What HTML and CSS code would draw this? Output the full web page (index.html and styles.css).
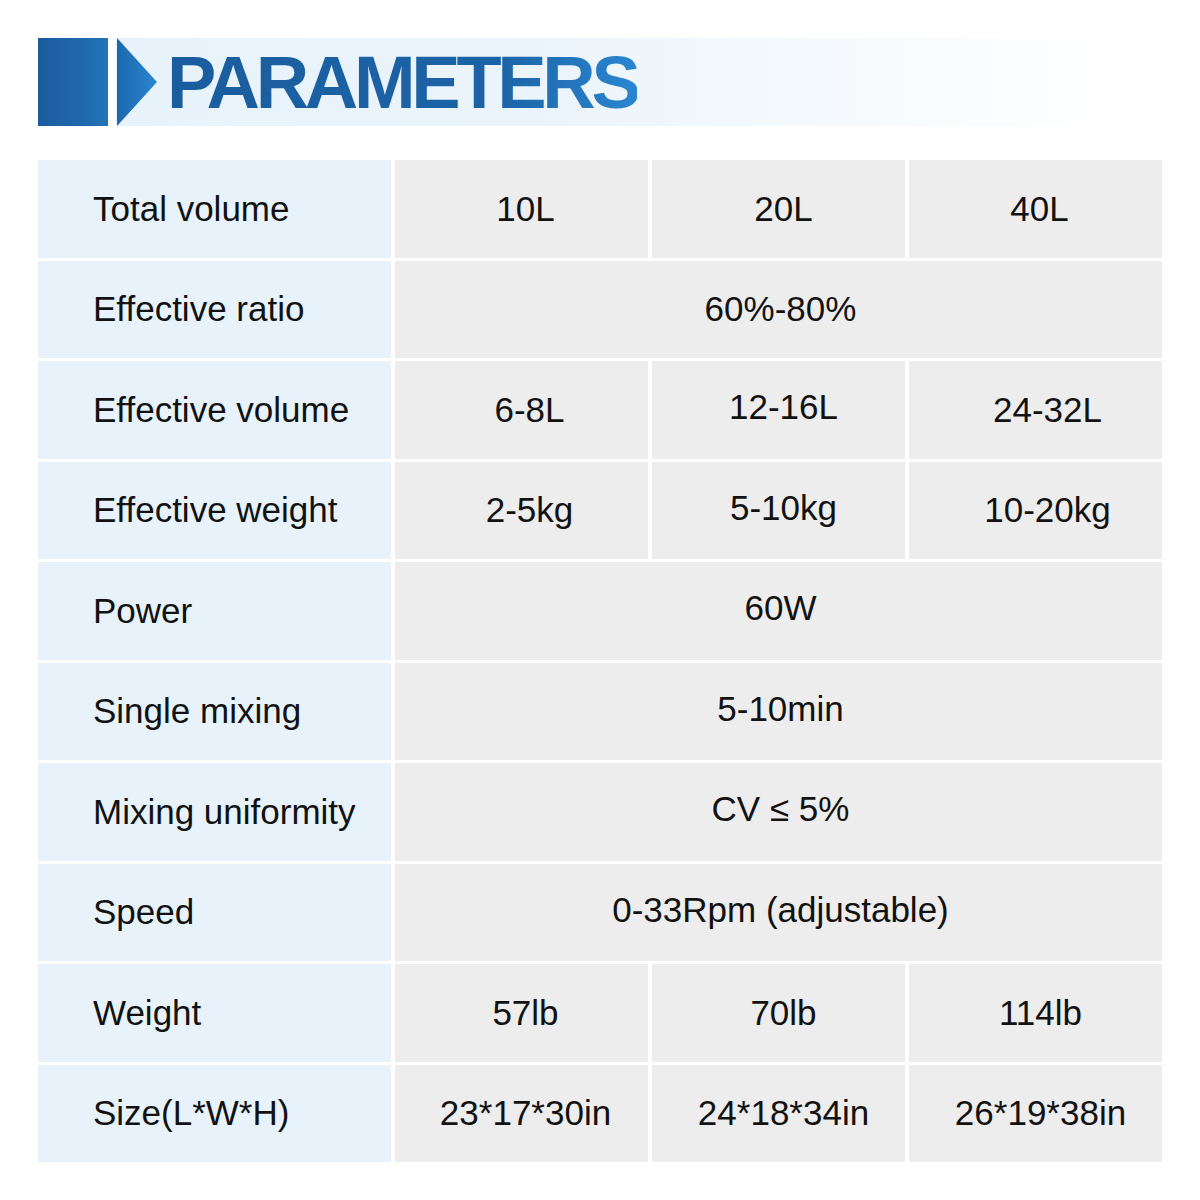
FILE: index.html
```html
<!DOCTYPE html>
<html>
<head>
<meta charset="utf-8">
<link rel="stylesheet" href="styles.css">
</head>
<body>
<div class="page">
  <div class="header">
    <div class="block"></div>
    <div class="band">
      <svg class="arrow" width="40" height="88" viewBox="0 0 40 88">
        <defs>
          <linearGradient id="tg" x1="0" y1="0" x2="1" y2="0">
            <stop offset="0" stop-color="#1c68ad"/>
            <stop offset="1" stop-color="#2a86d0"/>
          </linearGradient>
        </defs>
        <polygon points="0,0 40,44 0,88" fill="url(#tg)"/>
      </svg>
      <h1 class="title">PARAMETERS</h1>
    </div>
  </div>

  <div class="table">
    <div class="label">Total volume</div>
    <div class="val">10L</div>
    <div class="val r2">20L</div>
    <div class="val">40L</div>

    <div class="label">Effective ratio</div>
    <div class="val span">60%-80%</div>

    <div class="label">Effective volume</div>
    <div class="val r1">6-8L</div>
    <div class="val r2 up">12-16L</div>
    <div class="val r3">24-32L</div>

    <div class="label">Effective weight</div>
    <div class="val r1">2-5kg</div>
    <div class="val r2 up">5-10kg</div>
    <div class="val r3">10-20kg</div>

    <div class="label">Power</div>
    <div class="val span up">60W</div>

    <div class="label">Single mixing</div>
    <div class="val span up">5-10min</div>

    <div class="label">Mixing uniformity</div>
    <div class="val span up">CV ≤ 5%</div>

    <div class="label">Speed</div>
    <div class="val span up">0-33Rpm (adjustable)</div>

    <div class="label">Weight</div>
    <div class="val">57lb</div>
    <div class="val r2">70lb</div>
    <div class="val r2">114lb</div>

    <div class="label">Size(L*W*H)</div>
    <div class="val">23*17*30in</div>
    <div class="val r2">24*18*34in</div>
    <div class="val r2">26*19*38in</div>
  </div>
</div>
</body>
</html>
```

FILE: styles.css
```css
html, body {
  margin: 0;
  padding: 0;
  background: #ffffff;
}

.page {
  width: 1200px;
  height: 1200px;
  padding: 38px 38px 0 38px;
  box-sizing: border-box;
  font-family: "Liberation Sans", Arial, sans-serif;
}

.header {
  display: flex;
  height: 88px;
  width: 1122px;
}

.block {
  width: 70px;
  height: 88px;
  background: linear-gradient(90deg, #1a5c9d 0%, #1f68ab 60%, #2474b9 100%);
}

.band {
  flex: 1;
  margin-left: 8px;
  display: flex;
  align-items: center;
  background: linear-gradient(90deg, #e7f2fa 0%, #ebf4fb 40%, #f6fafd 70%, #ffffff 96%);
}

.arrow {
  display: block;
  margin-left: 1px;
  flex: none;
}

.title {
  margin: 0 0 0 10px;
  font-family: "Liberation Sans", Arial, sans-serif;
  font-weight: bold;
  font-size: 74px;
  line-height: 88px;
  letter-spacing: -4.3px;
  background: linear-gradient(90deg, #1a5d9e 0%, #1c63a6 70%, #2a86d1 100%);
  -webkit-background-clip: text;
  background-clip: text;
  color: transparent;
  padding-top: 2px;
}

.table {
  margin-top: 34px;
  width: 1124px;
  height: 1002px;
  display: grid;
  grid-template-columns: 353px 1fr 1fr 1fr;
  grid-template-rows: repeat(10, 1fr);
  column-gap: 4px;
  row-gap: 3px;
}

.label,
.val {
  display: flex;
  align-items: center;
  font-size: 35px;
  color: #121212;
}

.label {
  background: #e7f2fa;
  padding-left: 55px;
}

.val {
  background: #ededed;
  justify-content: center;
  padding-left: 8px;
}

.val.span {
  grid-column: 2 / 5;
  padding-left: 4px;
}

.val.r1 {
  padding-left: 16px;
}

.val.r2 {
  padding-left: 10px;
}

.val.r3 {
  padding-left: 24px;
}

.val.up {
  padding-bottom: 5px;
}
```
